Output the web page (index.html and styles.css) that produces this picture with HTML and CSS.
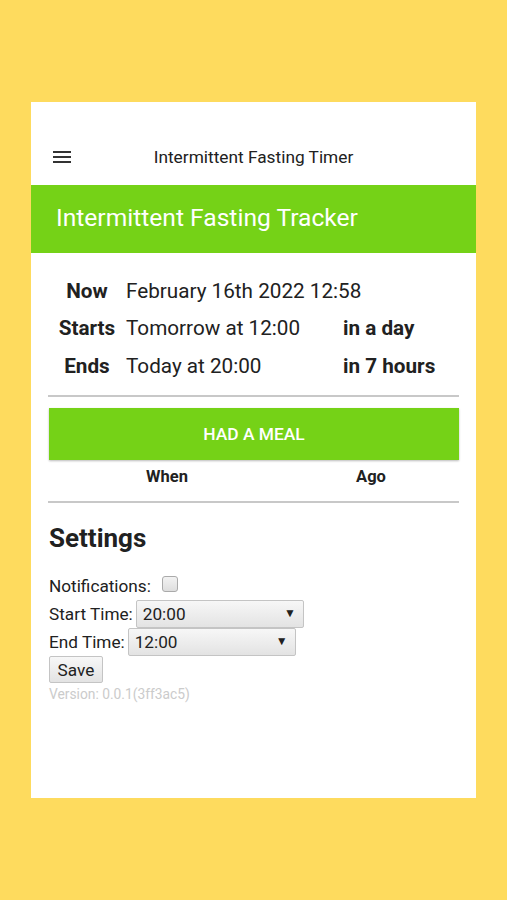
FILE: index.html
```html
<!DOCTYPE html>
<html lang="en">
<head>
    <meta charset="UTF-8">
    <meta name="viewport" content="width=device-width, initial-scale=1.0">
    <link rel="stylesheet" href="styles.css">
    <title>Intermittent Fasting Timer</title>
</head>
<body>
    <div class="screen">
        <div class="appbar">
            <svg class="menu" width="18" height="14" viewBox="0 0 18 14">
                <rect x="0" y="1" width="18" height="2" fill="#333"/>
                <rect x="0" y="6" width="18" height="2" fill="#333"/>
                <rect x="0" y="11" width="18" height="2" fill="#333"/>
            </svg>
            <div class="appbar-title">Intermittent Fasting Timer</div>
        </div>
        <div class="hero">Intermittent Fasting Tracker</div>

        <div class="content">
            <div class="times">
                <div class="label">Now</div>
                <div class="value wide">February 16th 2022 12:58</div>

                <div class="label">Starts</div>
                <div class="value">Tomorrow at 12:00</div>
                <div class="rel">in a day</div>

                <div class="label">Ends</div>
                <div class="value">Today at 20:00</div>
                <div class="rel">in 7 hours</div>
            </div>

            <hr class="divider">

            <div class="button">HAD A MEAL</div>
            <div class="meals">
                <div>When</div>
                <div>Ago</div>
            </div>

            <hr class="divider">

            <h2 class="settings-title">Settings</h2>
            <div class="settings">
                <label class="field">
                    <span>Notifications:</span>
                    <input type="checkbox" class="check">
                </label>
                <label class="field">
                    <span>Start Time:</span>
                    <span class="select">
                        <select>
                            <option>20:00</option>
                        </select>
                    </span>
                </label>
                <label class="field">
                    <span>End Time:</span>
                    <span class="select">
                        <select>
                            <option>12:00</option>
                        </select>
                    </span>
                </label>
                <div class="field">
                    <button class="save">Save</button>
                </div>
                <div class="version">Version: 0.0.1(3ff3ac5)</div>
            </div>
        </div>
    </div>
</body>
</html>
```

FILE: styles.css
```css
body{
    margin: 0;
    background: #fedb5e;
    font-family: Roboto, "Liberation Sans", sans-serif;
    color: #212121;
}
.screen{
    width: 445px;
    height: 696px;
    margin: 102px 0 0 31px;
    background: #fff;
}
.appbar{
    display: flex;
    align-items: center;
    height: 57px;
    padding: 26px 0 0 22px;
    position: relative;
}
.menu{
    display: block;
}
.appbar-title{
    flex: 1;
    text-align: center;
    font-size: 17.3px;
    margin-right: 40px;
}
.hero{
    background: #75d217;
    color: #fff;
    height: 68px;
    line-height: 66px;
    padding-left: 25px;
    font-size: 24.6px;
}
.content{
    padding: 0 17px;
}
.times{
    display: grid;
    grid-template-columns: 78px 217px 1fr;
    grid-auto-rows: 37.5px;
    align-items: center;
    padding-top: 19px;
    font-size: 20.7px;
}
.times .label{
    font-weight: bold;
    text-align: center;
}
.times .wide{
    grid-column: 2 / 4;
}
.times .rel{
    font-weight: bold;
}
.divider{
    border: 0;
    border-top: 2px solid #c8c8c8;
    margin: 10px 0 0;
}
.button{
    margin: 11px 0 0 1px;
    height: 52px;
    line-height: 52px;
    background: #75d217;
    color: #fff;
    text-align: center;
    font-size: 17.4px;
    font-weight: 500;
    box-shadow: 0 1px 2px #bbb;
}
.meals{
    display: grid;
    grid-template-columns: 204px 204px;
    margin-left: 17px;
    height: 33px;
    line-height: 33px;
    text-align: center;
    font-size: 16.5px;
    font-weight: bold;
}
.meals + .divider{
    margin-top: 8px;
}
.settings-title{
    margin: 19px 0 0 1px;
    font-size: 26px;
    line-height: 32px;
}
.settings{
    margin: 18px 0 0 1px;
    font-size: 17.2px;
}
.field{
    display: flex;
    align-items: center;
    height: 28px;
}
.check{
    margin: 0 0 4px 11px;
    width: 16px;
    height: 16px;
    appearance: none;
    border: 1px solid #aaa;
    border-radius: 3px;
    background: linear-gradient(#f2f2f2, #dedede);
}
.select{
    position: relative;
    margin-left: 3px;
}
.select select{
    appearance: none;
    width: 168px;
    height: 28px;
    padding: 0 0 0 6px;
    font-family: Roboto, "Liberation Sans", sans-serif;
    font-size: 17.2px;
    color: #212121;
    border: 1px solid #c4c4c4;
    border-radius: 2px;
    background: linear-gradient(#f7f7f7, #e3e3e3);
}
.select::after{
    content: "▼";
    position: absolute;
    right: 8px;
    top: 6px;
    font-size: 12px;
    pointer-events: none;
}
.save{
    width: 54px;
    height: 27px;
    padding: 0;
    font-family: Roboto, "Liberation Sans", sans-serif;
    font-size: 17.2px;
    color: #212121;
    border: 1px solid #c4c4c4;
    border-radius: 2px;
    background: linear-gradient(#f7f7f7, #e3e3e3);
}
.version{
    color: #cbcbcb;
    font-size: 13.8px;
    margin-top: 2px;
}
```
